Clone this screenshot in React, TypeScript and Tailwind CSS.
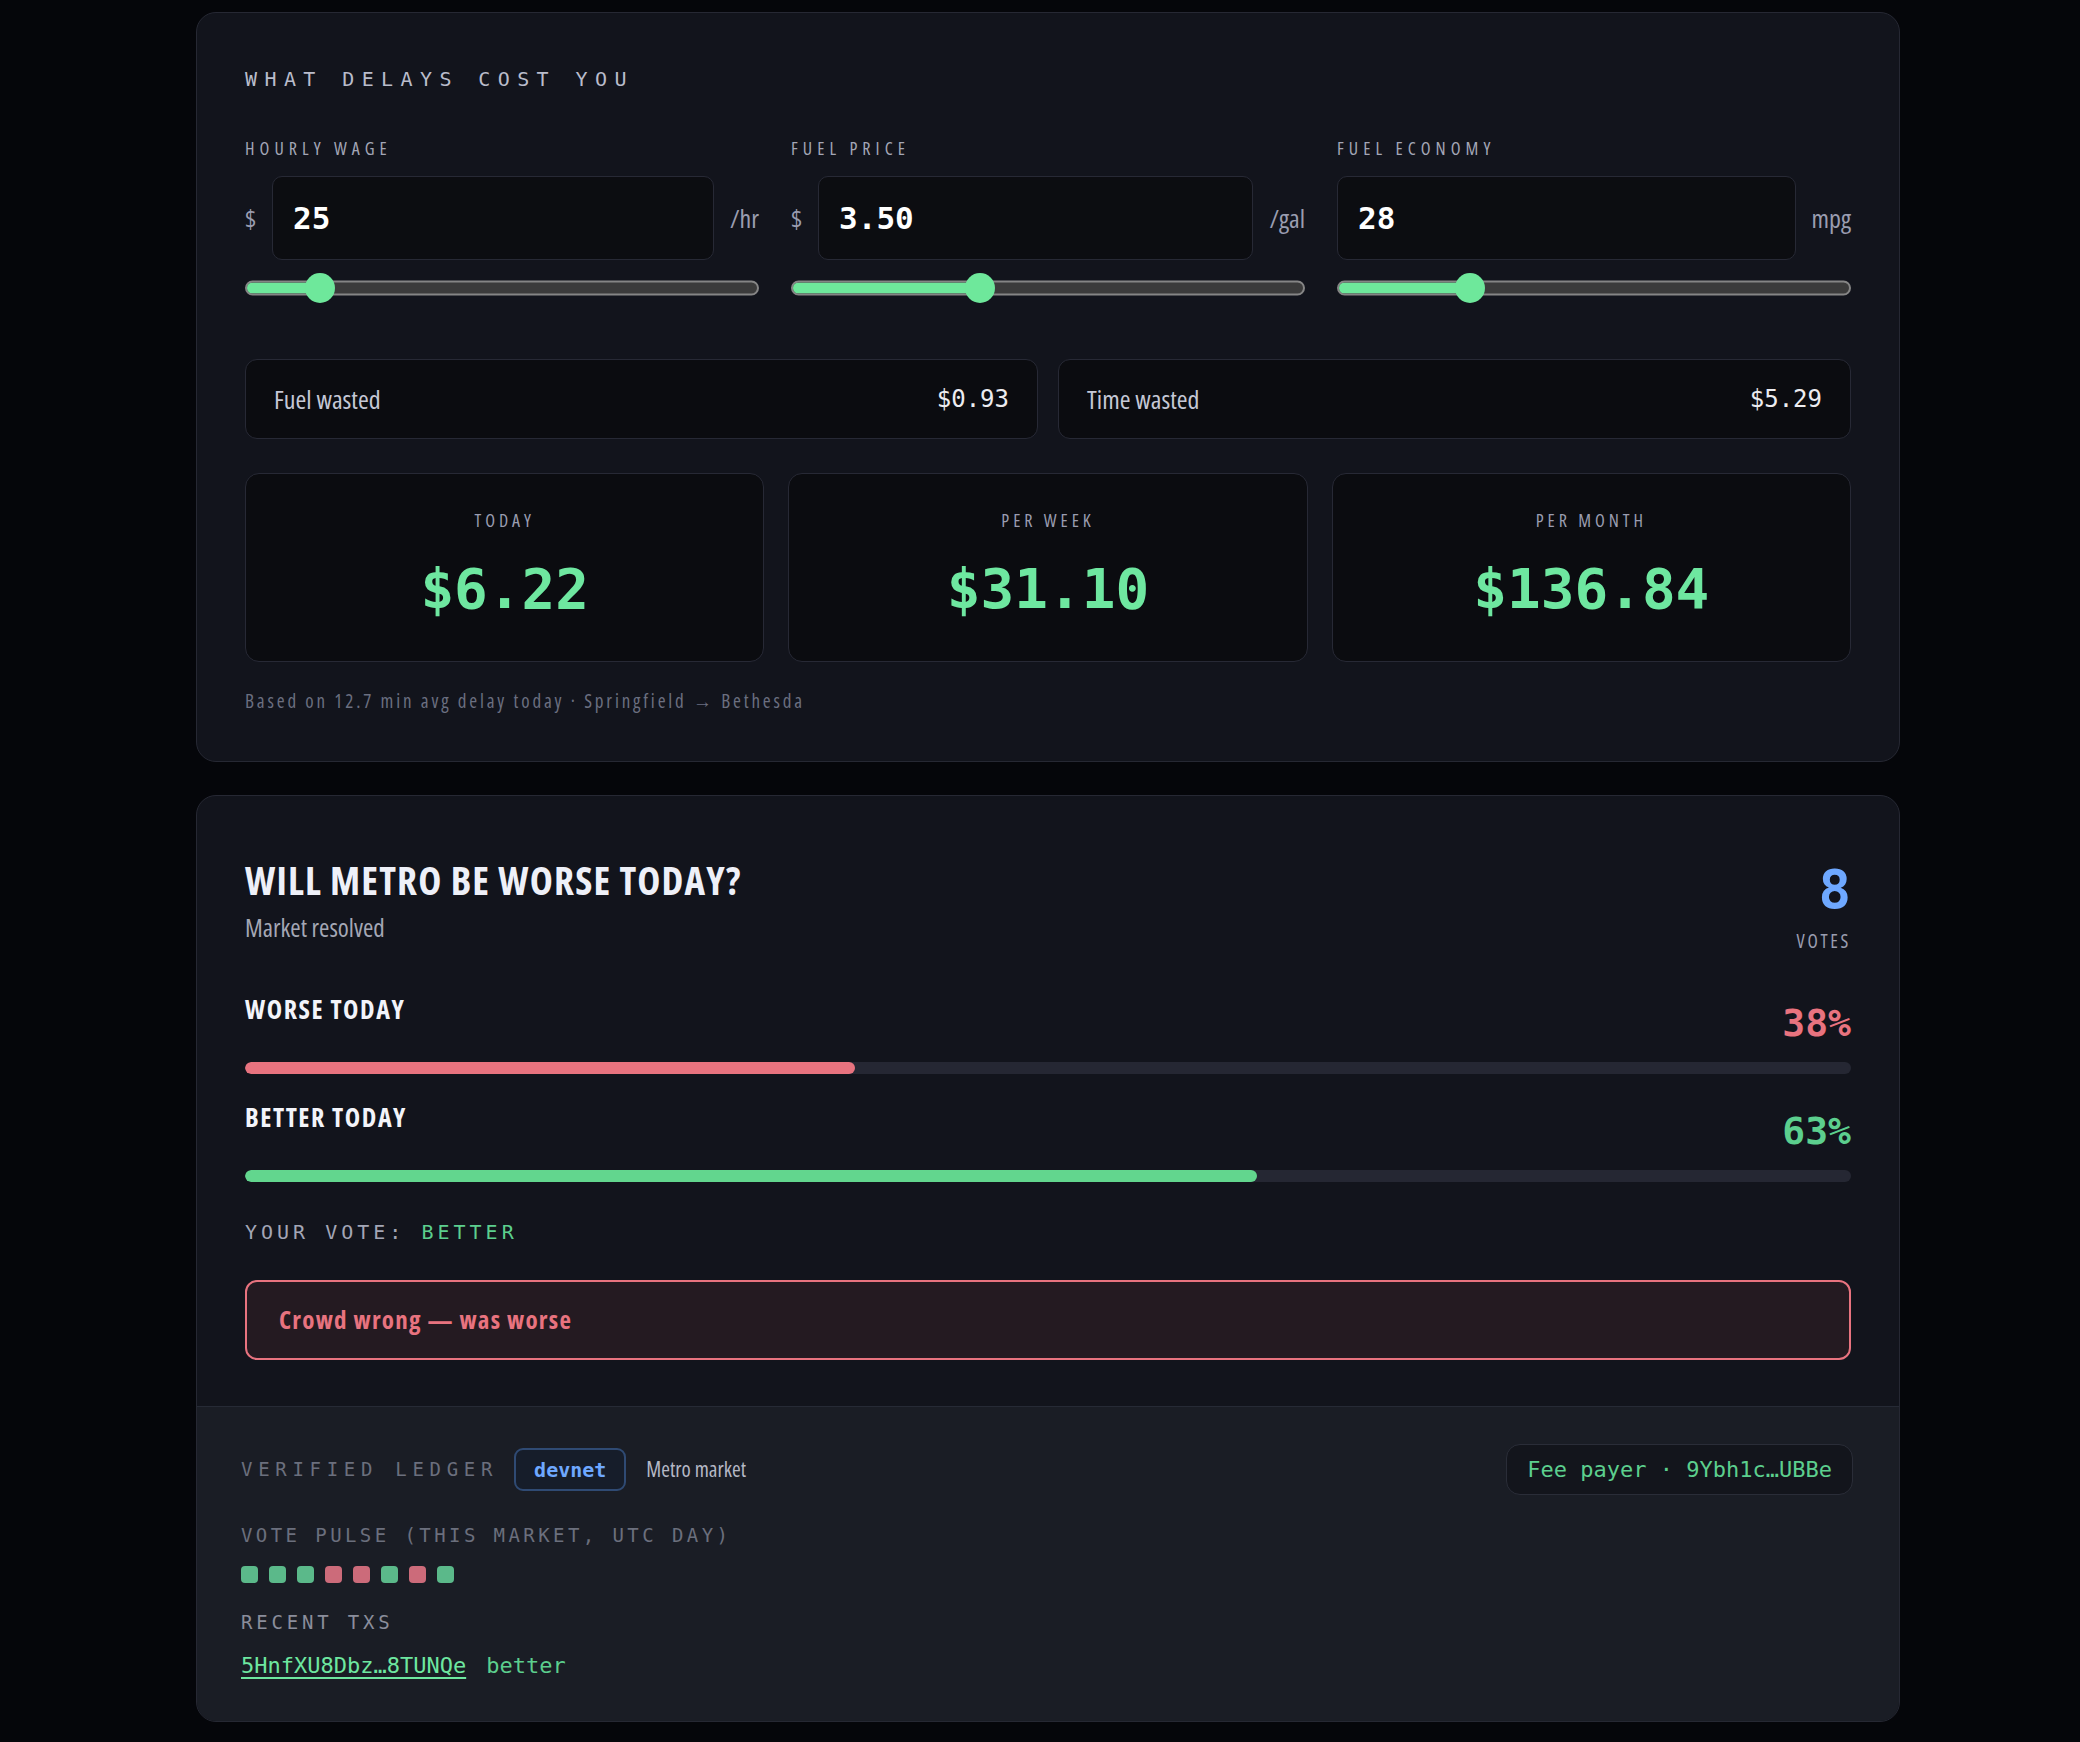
import React from 'react'

const cond = "font-['Open_Sans',sans-serif] font-stretch-condensed"
const mono = "font-['DejaVu_Sans_Mono','Liberation_Mono',monospace]"

function Slider({ pct }: { pct: number }) {
  return (
    <div className="relative h-[30px] mt-[13px]">
      <div className="absolute left-0 right-0 top-1/2 -translate-y-1/2 h-[15px] rounded-full bg-[#3b3b3b] border-2 border-[#858585] overflow-hidden">
        <div className="h-full bg-[#6ee89b]" style={{ width: `${pct}%` }} />
      </div>
      <div
        className="absolute top-1/2 w-[30px] h-[30px] -translate-x-1/2 -translate-y-1/2 rounded-full bg-[#6ee89b]"
        style={{ left: `${pct}%` }}
      />
    </div>
  )
}

function Field({ label, prefix, value, unit, pct }: { label: string; prefix?: string; value: string; unit: string; pct: number }) {
  return (
    <div>
      <div className={`${cond} text-[18px] leading-[24px] tracking-[0.28em] text-[#a3a6b6]`}>{label}</div>
      <div className="flex items-center gap-4 mt-4">
        {prefix && <span className={`${cond} text-[26px] text-[#9a9db0]`}>{prefix}</span>}
        <div className={`flex-1 h-[84px] flex items-center px-5 rounded-[10px] bg-[#0c0d11] border border-[#272935] ${mono} font-bold text-[31px] text-white`}>
          {value}
        </div>
        <span className={`${cond} text-[26px] text-[#9a9db0]`}>{unit}</span>
      </div>
      <Slider pct={pct} />
    </div>
  )
}

function Wasted({ label, value }: { label: string; value: string }) {
  return (
    <div className="h-[80px] flex items-center justify-between px-7 rounded-[12px] bg-[#0b0c10] border border-[#272935]">
      <span className={`${cond} text-[26px] text-[#c5c8d6]`}>{label}</span>
      <span className={`${mono} text-[24px] text-[#ececf0]`}>{value}</span>
    </div>
  )
}

function Stat({ label, value }: { label: string; value: string }) {
  return (
    <div className="h-[189px] pt-[34px] flex flex-col items-center rounded-[14px] bg-[#0b0c10] border border-[#272935]">
      <div className={`${cond} text-[18px] leading-[24px] tracking-[0.22em] text-[#9a9db0]`}>{label}</div>
      <div className={`${mono} font-bold text-[56px] leading-[64px] mt-[25px] text-[#6ee7a0]`}>{value}</div>
    </div>
  )
}

function OutcomeRow({ label, pct, color, bar }: { label: string; pct: number; color: string; bar: string }) {
  return (
    <div>
      <div className="flex justify-between items-start">
        <div className={`${cond} font-bold text-[26px] leading-[32px] tracking-[0.06em] text-[#f3f4fa]`}>{label}</div>
        <div className={`${mono} font-bold text-[38px] leading-[44px] mt-2 ${color}`}>{pct}%</div>
      </div>
      <div className="mt-[17px] h-[12px] rounded-full bg-[#252733] overflow-hidden">
        <div className={`h-full rounded-full ${bar}`} style={{ width: `${pct}%` }} />
      </div>
    </div>
  )
}

const pulse = ['g', 'g', 'g', 'r', 'r', 'g', 'r', 'g']

export default function App() {
  return (
    <div className="min-h-screen bg-[#05060a] pt-[12px] pb-[20px]">
      <div className="ml-[196px] w-[1704px] rounded-[20px] bg-[#12141c] border border-[#262833] px-12 pt-[50px] pb-12">
        <div className={`${mono} text-[20px] leading-[32px] tracking-[0.37em] text-[#b9bccb]`}>WHAT DELAYS COST YOU</div>
        <div className="grid grid-cols-3 gap-8 mt-[41px]">
          <Field label="HOURLY WAGE" prefix="$" value="25" unit="/hr" pct={14.6} />
          <Field label="FUEL PRICE" prefix="$" value="3.50" unit="/gal" pct={36.8} />
          <Field label="FUEL ECONOMY" value="28" unit="mpg" pct={25.9} />
        </div>
        <div className="grid grid-cols-2 gap-5 mt-14">
          <Wasted label="Fuel wasted" value="$0.93" />
          <Wasted label="Time wasted" value="$5.29" />
        </div>
        <div className="grid grid-cols-3 gap-6 mt-[34px]">
          <Stat label="TODAY" value="$6.22" />
          <Stat label="PER WEEK" value="$31.10" />
          <Stat label="PER MONTH" value="$136.84" />
        </div>
        <div className={`${cond} text-[19px] leading-[24px] tracking-[0.15em] text-[#6b6f80] mt-[27px]`}>
          Based on 12.7 min avg delay today · Springfield → Bethesda
        </div>
      </div>

      <div className="ml-[196px] w-[1704px] mt-[33px] rounded-[20px] bg-[#12141c] border border-[#262833] overflow-hidden">
        <div className="px-12 pt-[62px] pb-[46px]">
          <div className="flex justify-between items-start">
            <div>
              <div className={`${cond} font-bold text-[39px] leading-[44px] tracking-[0.03em] text-[#eef0f8]`}>WILL METRO BE WORSE TODAY?</div>
              <div className={`${cond} text-[25px] leading-[30px] mt-[10px] text-[#a4a7b5]`}>Market resolved</div>
            </div>
            <div className="flex flex-col items-end mt-[4px]">
              <div className={`${mono} font-bold text-[54px] leading-[56px] text-[#6ea8ff]`}>8</div>
              <div className={`${cond} text-[19px] leading-[24px] tracking-[0.14em] mt-[11px] text-[#9a9db0]`}>VOTES</div>
            </div>
          </div>
          <div className="mt-[40px]">
            <OutcomeRow label="WORSE TODAY" pct={38} color="text-[#e8737f]" bar="bg-[#e8737f]" />
          </div>
          <div className="mt-[27px]">
            <OutcomeRow label="BETTER TODAY" pct={63} color="text-[#5ccf8e]" bar="bg-[#62d68e]" />
          </div>
          <div className={`${mono} text-[20px] leading-[28px] tracking-[0.2em] mt-[36px] text-[#a3a6b6]`}>
            YOUR VOTE: <span className="text-[#5ccf8e]">BETTER</span>
          </div>
          <div className="mt-[34px] h-[80px] flex items-center px-8 rounded-[12px] bg-[#241a21] border-2 border-[#e8737f]">
            <span className={`${cond} font-bold text-[25px] tracking-[0.05em] text-[#e8737f]`}>Crowd wrong — was worse</span>
          </div>
        </div>

        <div className="border-t border-[#262a35] bg-[#1a1d25] pl-[44px] pr-[46px] pt-[37px] pb-[41px]">
          <div className="flex justify-between items-center">
            <div className="flex items-center">
              <span className={`${mono} text-[19px] tracking-[0.3em] text-[#6b6f7d]`}>VERIFIED LEDGER</span>
              <span className={`${mono} font-bold text-[20px] ml-[16px] px-[18px] h-[43px] flex items-center rounded-[9px] border-2 border-[#2f4a73] bg-[#161d2a] text-[#6ea8ff]`}>devnet</span>
              <span className={`${cond} text-[21px] ml-5 text-[#b5b8c5]`}>Metro market</span>
            </div>
            <div className={`${mono} text-[22px] h-[51px] px-[20px] flex items-center rounded-[14px] bg-[#13151c] border border-[#2a2d38] text-[#5ccf8e]`}>
              Fee payer · 9Ybh1c…UBBe
            </div>
          </div>
          <div className={`${mono} text-[19px] leading-[24px] tracking-[0.18em] mt-[28px] text-[#6b6f7d]`}>VOTE PULSE (THIS MARKET, UTC DAY)</div>
          <div className="flex gap-[11px] mt-[19px]">
            {pulse.map((p, i) => (
              <div key={i} className={`w-[17px] h-[17px] rounded-[4px] ${p === 'g' ? 'bg-[#5bb98a]' : 'bg-[#cc6b7a]'}`} />
            ))}
          </div>
          <div className={`${mono} text-[19px] leading-[24px] tracking-[0.2em] mt-[27px] text-[#8a8d9b]`}>RECENT TXS</div>
          <div className={`${mono} text-[22px] leading-[28px] mt-[18px] flex gap-5`}>
            <span className="underline underline-offset-4 text-[#6ee7a0]">5HnfXU8Dbz…8TUNQe</span>
            <span className="text-[#5ccf8e]">better</span>
          </div>
        </div>
      </div>
    </div>
  )
}
